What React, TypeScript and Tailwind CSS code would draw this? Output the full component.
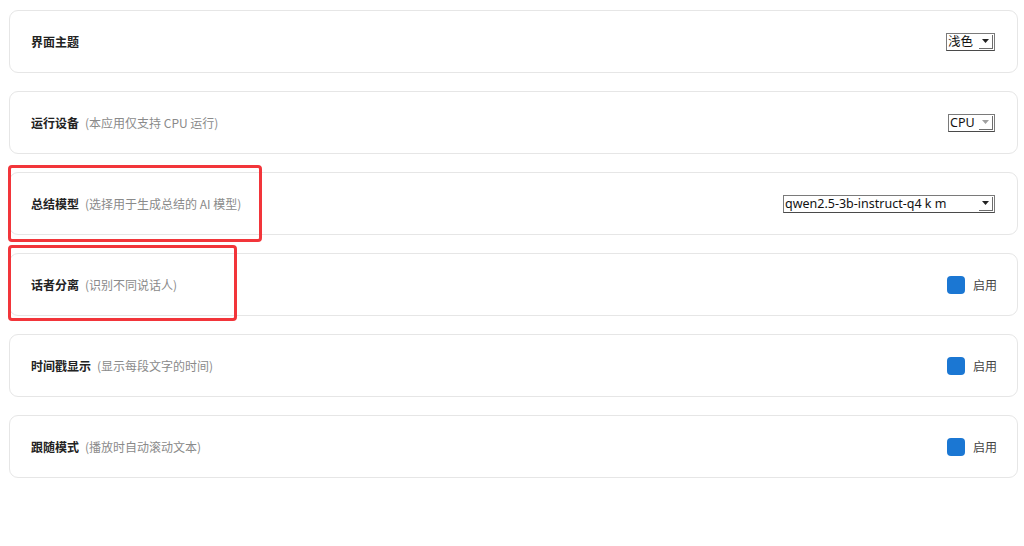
import React from "react";

const cjk = { fontFamily: '"Noto Sans CJK SC", "Noto Sans", sans-serif' };

interface SelectBoxProps {
  value: string;
  width: string;
  disabled?: boolean;
}

const SelectBox = (props: SelectBoxProps) => {
  return (
    <div
      className={`flex items-center h-[18px] bg-white border border-[#7a7a7a] border-b-[#4a4a4a] ${props.width}`}
    >
      <span
        className="flex-1 pl-[1px] text-[12.5px] leading-[16px] text-[#111] whitespace-nowrap overflow-hidden"
        style={{ fontFamily: '"Noto Sans", "Noto Sans CJK SC", sans-serif' }}
      >
        {props.value}
      </span>
      <div className="flex items-center justify-center w-[14px] h-[14px] mr-[1px] bg-white border-r border-b border-[#6d6d6d]">
        <svg width="7" height="4" viewBox="0 0 7 4">
          <path d="M0 0h7L3.5 4z" fill={props.disabled ? "#a0a0a0" : "#222"} />
        </svg>
      </div>
    </div>
  );
};

const Toggle = () => {
  return (
    <div className="flex items-center gap-[8px] -mr-[2px]">
      <div className="w-[18px] h-[18px] rounded-[4px] bg-[#1b77d3]"></div>
      <span className="text-[12px] text-[#444]" style={cjk}>
        启用
      </span>
    </div>
  );
};

interface RowProps {
  label: string;
  desc?: string;
  children: React.ReactNode;
}

const Row = (props: RowProps) => {
  return (
    <div className="flex items-center justify-between h-[63px] pl-[21px] pr-[22px] bg-white border border-[#e6e6e6] rounded-[9px]">
      <div className="flex items-center gap-[6px] text-[12px]" style={cjk}>
        <span className="font-bold text-[#222]">{props.label}</span>
        {props.desc && <span className="text-[#8a8a8a]">{props.desc}</span>}
      </div>
      {props.children}
    </div>
  );
};

export default function App() {
  return (
    <div className="relative w-[1024px] h-[546px] bg-white overflow-hidden">
      <div className="flex flex-col gap-[18px] pt-[10px] pl-[9px] pr-[6px]">
        <Row label="界面主题">
          <SelectBox value="浅色" width="w-[49px]" />
        </Row>
        <Row label="运行设备" desc="(本应用仅支持 CPU 运行)">
          <SelectBox value="CPU" width="w-[47px]" disabled />
        </Row>
        <Row label="总结模型" desc="(选择用于生成总结的 AI 模型)">
          <SelectBox value="qwen2.5-3b-instruct-q4 k m" width="w-[212px]" />
        </Row>
        <Row label="话者分离" desc="(识别不同说话人)">
          <Toggle />
        </Row>
        <Row label="时间戳显示" desc="(显示每段文字的时间)">
          <Toggle />
        </Row>
        <Row label="跟随模式" desc="(播放时自动滚动文本)">
          <Toggle />
        </Row>
      </div>
      <div className="absolute left-[8px] top-[165px] w-[254px] h-[77px] border-[3px] border-[#f2353a] rounded-[4px]"></div>
      <div className="absolute left-[8px] top-[245px] w-[229px] h-[76px] border-[3px] border-[#f2353a] rounded-[4px]"></div>
    </div>
  );
}
